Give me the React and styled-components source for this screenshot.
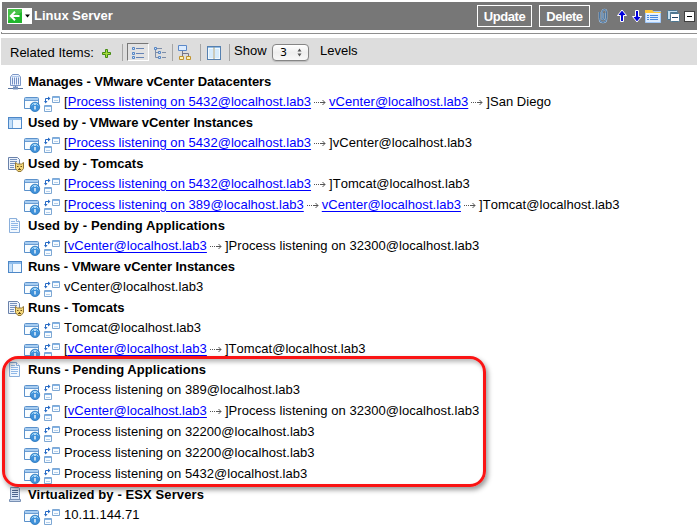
import React from "react";
import styled, { createGlobalStyle } from "styled-components";

const GlobalStyle = createGlobalStyle`
  * { box-sizing: border-box; }
  body { margin: 0; background: #fff; color: #000; font: 13px/20px "Liberation Sans", Arial, sans-serif; }
  svg { display: block; flex: none; }
`;

const Page = styled.div`
  position: relative;
  width: 697px;
  height: 528px;
  overflow: hidden;
  padding-top: 2px;
`;
const TitleBar = styled.header`
  display: flex;
  align-items: center;
  height: 28px;
  margin-left: 2px;
  padding-left: 5px;
  background: #777;
  color: #fff;
  font-weight: bold;
`;
const BackButton = styled.div`
  display: flex;
  align-items: center;
  width: 25px;
  height: 16px;
  background: #fff;
`;
const Title = styled.h1`
  margin: 0 auto 0 2px;
  font-size: 13px;
  line-height: 20px;
`;
const ActionButton = styled.button`
  height: 22px;
  width: ${(p) => p.$width}px;
  margin-right: ${(p) => p.$gap}px;
  padding: 0;
  border: 1px solid #fff;
  background: #777;
  color: #fff;
  font: bold 13px "Liberation Sans", Arial, sans-serif;
  letter-spacing: -0.45px;
`;
const TitleIcons = styled.div`
  display: flex;
  align-items: center;
`;
const IconSlot = styled.span`
  margin-right: ${(p) => p.$gap}px;
`;
const Rule = styled.div`
  height: 2px;
  margin: 2px 0 4px 1px;
  border-left: 1px solid #8e8e8e;
  border-bottom: 1px solid #8e8e8e;
`;
const Toolbar = styled.div`
  display: flex;
  align-items: center;
  height: 27px;
  margin-left: 1px;
  padding: 2px 0 0 9px;
  background: #ddd;
`;
const ToolLabel = styled.span`
  width: ${(p) => p.$width}px;
  margin-bottom: ${(p) => p.$lift || 0}px;
  white-space: nowrap;
`;
const Divider = styled.i`
  width: 1px;
  height: 17px;
  margin: 0 ${(p) => p.$after}px 0 ${(p) => p.$before}px;
  background: #a5a5a5;
`;
const ToolButton = styled.div`
  display: flex;
  align-items: center;
  justify-content: center;
  width: 22px;
  height: 18px;
  margin-bottom: ${(p) => (p.$active ? 2 : 0)}px;
  padding-top: ${(p) => (p.$active ? 2 : 0)}px;
  border: 1px solid;
  border-color: ${(p) => (p.$active ? "#777 #fff #fff #777" : "transparent")};
  background: ${(p) => (p.$active ? "#e2e2e2" : "transparent")};
`;
const LevelSelect = styled.div`
  display: flex;
  align-items: center;
  justify-content: space-between;
  width: 37px;
  height: 17px;
  margin-right: 11px;
  padding: 0 6px 0 7px;
  border: 1px solid #858585;
  border-radius: 4px;
  background: linear-gradient(#fff, #eee 50%, #f8f8f8);
  box-shadow: 0 1px 1px #bbb;
  font: 11px "DejaVu Sans", sans-serif;
`;
const Tree = styled.main`
  margin-top: 7px;
`;
const Heading = styled.h2`
  display: flex;
  align-items: center;
  height: 20px;
  margin: 0;
  padding-left: 8px;
  gap: 4px;
  font-size: 13px;
  line-height: 20px;
  letter-spacing: ${(p) => p.$spacing}px;
  white-space: nowrap;
`;
const Item = styled.div`
  display: flex;
  align-items: center;
  height: 21px;
  padding: 0 0 2px 24px;
  letter-spacing: 0.045px;
  white-space: nowrap;
`;
const ItemIcons = styled.div`
  display: flex;
  gap: 3px;
  width: 40px;
  padding-top: 4px;
`;
const ItemLabel = styled.span`
  font-kerning: ${(p) => (p.$unkerned ? "none" : "auto")};
`;
const ItemLink = styled.a`
  color: #00f;
  text-decoration: underline;
  text-underline-offset: 2px;
  text-decoration-thickness: 1px;
`;
const ArrowWrap = styled.span`
  display: flex;
  width: 18px;
  padding: 2px 0 0 3px;
`;
const Highlight = styled.div`
  position: absolute;
  left: 2px;
  top: 356px;
  width: 484px;
  height: 131px;
  border: 3px solid #fa1414;
  border-radius: 16px;
  box-shadow: 2px 3px 5px rgba(0, 0, 0, 0.4), inset 2px 3px 4px rgba(0, 0, 0, 0.28);
  pointer-events: none;
`;

const BackIcon = () => (
  <svg width="25" height="16" viewBox="0 0 25 16">
    <rect x="1" y="1" width="14" height="14" fill="#20b62b" />
    <path d="M1 1h14v3L1 13z" fill="#6ed065" opacity=".5" />
    <path d="M3.500 8h9M8 3.800 3.800 8 8 12.200" fill="none" stroke="#fff" strokeWidth="2" />
    <path d="M18 6.500h5L20.500 9.500z" fill="#000" />
  </svg>
);
const clipPath = "M1.500 4v6.500q0 4 3.500 4t3.500-4V4q0-2.500-2-2.500T4 4v6q0 1.500 1.200 1.500T6.400 10V5";
const ClipIcon = () => (
  <svg width="10" height="16" viewBox="0 0 10 16" fill="none">
    <path d={clipPath} stroke="#a9c9e8" strokeWidth="1.700" />
    <path d={clipPath} stroke="#234f80" strokeWidth=".7" />
  </svg>
);
const MoveIcon = ({ down }) => (
  <svg width="10" height="14" viewBox="0 0 10 14">
    <path transform={down ? "rotate(180 5 7)" : undefined} d="M5 1 9.500 6.500h-3v6h-3v-6h-3z" fill="#00d" stroke="#fff" />
  </svg>
);
const FormIcon = () => (
  <svg width="16" height="14" viewBox="0 0 16 14">
    <path d="M.5 13.500V2.500l1-1H7l1 1h7.500v11z" fill="#fff" stroke="#9fc8fa" />
    <path d="M0 1h7l2 2h7v1H0z" fill="#ffc83d" />
    <path d="M1 4.500h14V13H1z" fill="#deedff" />
    <path d="M2 6.500h2m1 0h8M2 8.500h2m1 0h8M2 10.500h2m1 0h8" stroke="#4888df" />
  </svg>
);
const StackIcon = () => (
  <svg width="13" height="14" viewBox="0 0 13 14">
    <path d="M.5 10.500v-8q0-1 1-1h8q1 0 1 1v1h-7v7z" fill="#c3dced" stroke="#4c7691" />
    <rect x="3.500" y="4.500" width="9" height="8" rx="1" fill="#fff" stroke="#4c7691" />
    <path d="M5 8.500h6" stroke="#246" />
  </svg>
);
const CollapseIcon = () => (
  <svg width="11" height="11" viewBox="0 0 11 11">
    <rect x=".5" y=".5" width="10" height="10" fill="#fff" stroke="#404040" />
    <path d="M3 5.500h5" stroke="#000" />
  </svg>
);
const PlusIcon = () => (
  <svg width="9" height="10" viewBox="0 0 9 10">
    <path d="M3.500 1.500h2v3h3v2h-3v3h-2v-3h-3v-2h3z" fill="#a8db3a" stroke="#438b12" />
  </svg>
);
const ListIcon = () => (
  <svg width="12" height="12" viewBox="0 0 12 12">
    <path d="M4 1.500h8M4 6.500h8M4 10.500h8" stroke="#6684b5" />
    <path d="M.5.500h2v2h-2zM.5 5.500h2v2h-2zM.5 9.500h2v2h-2z" fill="#cfe4fb" stroke="#5686c4" />
  </svg>
);
const BranchIcon = () => (
  <svg width="12" height="12" viewBox="0 0 12 12">
    <path d="M3 1.500h5M8 5.500h4M8 10.500h4M1.500 3v7.500H4M1.500 5.500H4" fill="none" stroke="#7d8da8" />
    <path d="M.5.500h2v2h-2zM4.500 4.500h2v2h-2zM4.500 9.500h2v2h-2z" fill="#cfe4fb" stroke="#5686c4" />
  </svg>
);
const MapIcon = () => (
  <svg width="14" height="16" viewBox="0 0 14 16">
    <path d="M4.500 6v6M4.500 8.500h6v3" fill="none" stroke="#778" />
    <path d="M.5.500h8v5h-8z" fill="#dcecff" stroke="#5b88c8" />
    <path d="M1.500 11.500h4v3h-4zM8.500 11.500h4v3h-4z" fill="#fff3b3" stroke="#c19431" />
  </svg>
);
const ColumnsIcon = () => (
  <svg width="14" height="14" viewBox="0 0 14 14">
    <rect x=".5" y=".5" width="13" height="13" fill="#f2faff" stroke="#5580af" />
    <path d="M1 1.500h12" stroke="#91bce8" />
    <path d="M2 3h4v9H2zM8 3h4v9H8z" fill="#d5ebfc" />
    <path d="M7 1v12" stroke="#a49b78" />
  </svg>
);
const StepperIcon = () => (
  <svg width="5" height="9" viewBox="0 0 5 9"><path d="M.5 3.500 2.500.5l2 3zM.5 5.500h4l-2 3z" fill="#555" /></svg>
);
const WindowInfoIcon = () => (
  <svg width="17" height="16" viewBox="0 0 17 16">
    <path d="M.5 12.500V2.500q0-1 1-1h12q1 0 1 1v10z" fill="#f9fdff" stroke="#5b91cb" />
    <path d="M1 2h13v2H1z" fill="#a7cdf1" />
    <path d="M1 4.500h13" stroke="#6b9dd3" />
    <circle cx="11" cy="10.900" r="4.700" fill="#3f91d9" stroke="#2a76bc" strokeWidth=".8" />
    <path d="M7.700 9.500a3.600 3.600 0 0 1 6.600 0" fill="none" stroke="#9bd8fb" />
    <path d="M11 10v3.500M11 7.700v1.300" stroke="#fff" strokeWidth="1.300" />
  </svg>
);
const RelationIcon = () => (
  <svg width="17" height="16" viewBox="0 0 17 16">
    <path d="M8.500.500h7v6h-7zM.5 9.500h7v6h-7z" fill="#f8fcff" stroke="#7ea8d4" />
    <path d="M9 1h6v1H9zM1 10h6v1H1z" fill="#80b2e7" />
    <path d="M10 4.500h4M2 13.500h4" stroke="#b7d0ea" />
    <path d="M1.500 6V2.500H5" fill="none" stroke="#286bc5" />
    <path d="M4 .5 6.500 2.500 4 4.500zM0 5h3.500L1.700 7.500z" fill="#286bc5" />
  </svg>
);
const DatacenterIcon = () => (
  <svg width="16" height="16" viewBox="0 0 16 16">
    <path d="M2.500 11.500V3l2-2.500h6l2 2.500v8.500z" fill="#edf4ff" stroke="#7b96c6" />
    <path d="M4.500 3.500v7M6.500 3.500v7M8.500 3.500v7M10.500 3.500v7" stroke="#7590c3" />
    <path d="M4 2.500h7" stroke="#b1caed" />
    <path d="M7.500 12v3M0 14.500h15" stroke="#58749e" />
    <rect x="5" y="12.500" width="5" height="3" fill="#7591be" />
  </svg>
);
const InstanceIcon = () => (
  <svg width="16" height="16" viewBox="0 0 16 16">
    <rect x=".5" y="2.500" width="13" height="11" fill="#fff" stroke="#4d87c7" />
    <path d="M1 3h12v2H1z" fill="#8fbdec" />
    <path d="M1 5h3v8H1z" fill="#c5e0fa" /><path d="M4.500 5v8" stroke="#82b1df" />
    <path d="M5 5h8v8H5z" fill="#f3f9ff" />
  </svg>
);
const TomcatIcon = () => (
  <svg width="16" height="16" viewBox="0 0 16 16">
    <path d="M.5 1.500h9l2 2v10H.5z" fill="#edf3fc" stroke="#6981aa" />
    <path d="M2 3.500h7M2 5.500h7M2 7.500h5M2 9.500h4M2 11.500h4" stroke="#7792bd" />
    <path d="M7.500 6.500 9.500 8h4l2-1.500v6L13 15.500h-3l-2.500-3z" fill="#f3d779" stroke="#94793a" />
    <path d="M9 10.500h1.500m2 0H14M10 13.500h3M11.500 12v2" stroke="#6c501f" />
  </svg>
);
const DocumentIcon = () => (
  <svg width="16" height="16" viewBox="0 0 16 16">
    <path d="M1.500.500h7l3 3v11h-10z" fill="#f3f9ff" stroke="#8aafdb" />
    <path d="M8.500.500v3h3" fill="#fff" stroke="#8aafdb" />
    <path d="M3 3.500h4M3 5.500h7M3 7.500h7M3 9.500h7M3 11.500h6" stroke="#91b9e8" />
  </svg>
);
const ServerIcon = () => (
  <svg width="16" height="16" viewBox="0 0 16 16">
    <path d="M2.500.500h8l1 1v11h-9z" fill="#dce7f8" stroke="#8197bb" />
    <path d="M4 3.500h6M4 5.500h6M4 7.500h6M4 9.500h6" stroke="#4f6690" />
    <path d="M1.500 12.500h11v2h-11z" fill="#c6d5ea" stroke="#7890b4" />
  </svg>
);
const ArrowIcon = () => (
  <svg width="12" height="7" viewBox="0 0 12 7">
    <path d="M0 3.500h1m1 0h1m1 0h1m1 0h5M8.500 1 11 3.500 8.500 6" fill="none" stroke="#555" />
  </svg>
);

const groups = [
  [DatacenterIcon, "Manages - VMware vCenter Datacenters", -0.09, [[["Process listening on 5432@localhost.lab3", "vCenter@localhost.lab3"], "San Diego"]]],
  [InstanceIcon, "Used by - VMware vCenter Instances", -0.06, [[["Process listening on 5432@localhost.lab3"], "vCenter@localhost.lab3"]]],
  [TomcatIcon, "Used by - Tomcats", 0.05, [
    [["Process listening on 5432@localhost.lab3"], "Tomcat@localhost.lab3"],
    [["Process listening on 389@localhost.lab3", "vCenter@localhost.lab3"], "Tomcat@localhost.lab3"],
  ]],
  [DocumentIcon, "Used by - Pending Applications", 0.08, [[["vCenter@localhost.lab3"], "Process listening on 32300@localhost.lab3"]]],
  [InstanceIcon, "Runs - VMware vCenter Instances", -0.06, [[[], "vCenter@localhost.lab3"]]],
  [TomcatIcon, "Runs - Tomcats", 0, [[[], "Tomcat@localhost.lab3"], [["vCenter@localhost.lab3"], "Tomcat@localhost.lab3"]]],
  [DocumentIcon, "Runs - Pending Applications", 0.06, [
    [[], "Process listening on 389@localhost.lab3"],
    [["vCenter@localhost.lab3"], "Process listening on 32300@localhost.lab3"],
    [[], "Process listening on 32200@localhost.lab3"],
    [[], "Process listening on 32200@localhost.lab3"],
    [[], "Process listening on 5432@localhost.lab3"],
  ]],
  [ServerIcon, "Virtualized by - ESX Servers", 0.1, [[[], "10.11.144.71"]]],
];

function RelatedItem({ path, label }) {
  return (
    <Item>
      <ItemIcons><WindowInfoIcon /><RelationIcon /></ItemIcons>
      {path.length > 0 && <span>[</span>}
      {path.map((name) => (
        <React.Fragment key={name}>
          <ItemLink>{name}</ItemLink>
          <ArrowWrap><ArrowIcon /></ArrowWrap>
        </React.Fragment>
      ))}
      <ItemLabel $unkerned={label.startsWith("Tomcat")}>{path.length > 0 ? "]" : ""}{label}</ItemLabel>
    </Item>
  );
}

export default function App() {
  return (
    <Page>
      <GlobalStyle />
      <TitleBar>
        <BackButton><BackIcon /></BackButton>
        <Title>Linux Server</Title>
        <ActionButton $width={55} $gap={7}>Update</ActionButton>
        <ActionButton $width={51} $gap={8}>Delete</ActionButton>
        <TitleIcons>
          <IconSlot $gap={9}><ClipIcon /></IconSlot>
          <IconSlot $gap={5}><MoveIcon /></IconSlot>
          <IconSlot $gap={3}><MoveIcon down /></IconSlot>
          <IconSlot $gap={6}><FormIcon /></IconSlot>
          <IconSlot $gap={4}><StackIcon /></IconSlot>
          <IconSlot $gap={2}><CollapseIcon /></IconSlot>
        </TitleIcons>
      </TitleBar>
      <Rule />
      <Toolbar>
        <ToolLabel $width={92}>Related Items:</ToolLabel>
        <PlusIcon />
        <Divider $before={11} $after={4} />
        <ToolButton $active><ListIcon /></ToolButton>
        <ToolButton><BranchIcon /></ToolButton>
        <Divider $before={1} $after={5} />
        <MapIcon />
        <Divider $before={8} $after={6} />
        <ColumnsIcon />
        <Divider $before={8} $after={4} />
        <ToolLabel $width={38} $lift={3}>Show</ToolLabel>
        <LevelSelect>3<StepperIcon /></LevelSelect>
        <ToolLabel $width={40} $lift={3}>Levels</ToolLabel>
      </Toolbar>
      <Tree>
        {groups.map(([Icon, title, spacing, items]) => (
          <section key={title}>
            <Heading $spacing={spacing}><Icon />{title}</Heading>
            {items.map(([path, label], i) => <RelatedItem key={i} path={path} label={label} />)}
          </section>
        ))}
      </Tree>
      <Highlight />
    </Page>
  );
}
